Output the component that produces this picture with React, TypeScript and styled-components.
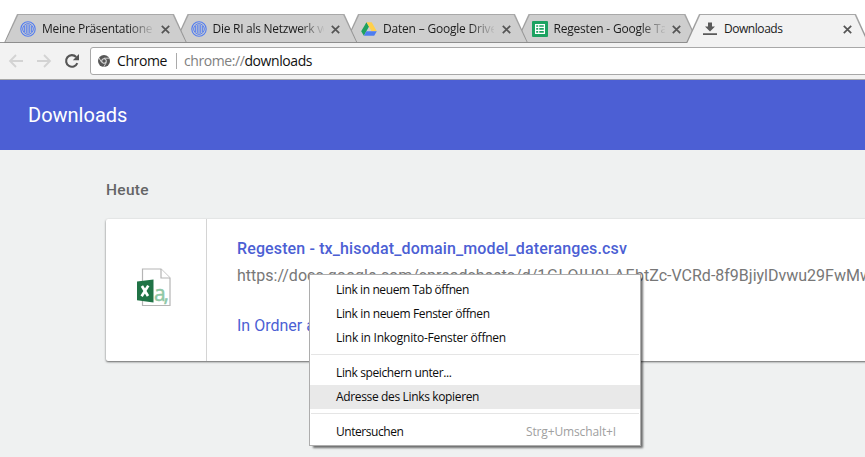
import React from "react";
import styled, { createGlobalStyle } from "styled-components";

const Global = createGlobalStyle`
  * { box-sizing: border-box; }
  html, body { margin: 0; background: #fff; overflow: hidden; }
`;

const UI_FONT = `"Open Sans", "Noto Sans", sans-serif`;

const Window = styled.div`
  width: 865px;
  height: 457px;
  overflow: hidden;
  position: relative;
  display: flex;
  flex-direction: column;
  background: #eff1f1;
  font-family: Roboto, sans-serif;
`;

const TabStrip = styled.div`
  height: 43px;
  flex: none;
  display: flex;
  align-items: flex-end;
  padding-left: 4px;
  background: #fff;
  box-shadow: inset 0 -1px 0 #979797;
`;

const TabBox = styled.div<{ $active?: boolean; $z: number }>`
  position: relative;
  z-index: ${(p) => p.$z};
  flex: none;
  width: 183px;
  height: 29px;
  margin-right: -12.5px;
  padding: 1px 15px 0 16px;
  display: flex;
  align-items: center;
  font: 12px/16px ${UI_FONT};
  color: #1c1c1c;

  &::before,
  &::after {
    content: "";
    position: absolute;
    z-index: -1;
    clip-path: polygon(13px 0, calc(100% - 13px) 0, 100% 100%, 0 100%);
  }
  &::before {
    inset: 0;
    background: linear-gradient(#a9a9a9, #8d8d8d);
  }
  &::after {
    inset: 1px 1.3px ${(p) => (p.$active ? 0 : 1)}px;
    background: ${(p) => (p.$active ? "#f2f2f2" : "#cecece")};
  }
`;

const Favicon = styled.span`
  width: 16px;
  height: 16px;
  flex: none;
  display: flex;
`;

const TabTitle = styled.span<{ $fade?: boolean; $spacing: number }>`
  width: 111px;
  flex: none;
  margin-left: 6px;
  overflow: hidden;
  white-space: nowrap;
  letter-spacing: ${(p) => p.$spacing}px;
  mask-image: ${(p) => (p.$fade ? "linear-gradient(90deg, #000 86px, transparent 113px)" : "none")};
`;

const CloseIcon = styled.svg`
  width: 9px;
  height: 9px;
  flex: none;
  margin-left: 7.5px;
`;

const Toolbar = styled.div`
  height: 37px;
  flex: none;
  display: flex;
  background: #f2f2f2;
  border-bottom: 1px solid #a7a7a7;
  padding: 4px 0 0 8px;
`;

const NavIcons = styled.div`
  display: flex;
  width: 82px;
  flex: none;
  gap: 12px;
  padding-top: 6px;
`;

const Omnibox = styled.div`
  flex: none;
  width: 790px;
  height: 28px;
  border: 1px solid #a8a8a8;
  border-radius: 3px;
  background: #fff;
  display: flex;
  align-items: center;
  padding-left: 7px;
  font: 14px/20px ${UI_FONT};
  color: #111;
`;

const Scheme = styled.span`
  width: 50px;
  margin-left: 7px;
  letter-spacing: -0.4px;
`;

const Divider = styled.span`
  width: 1px;
  height: 16px;
  margin: 0 7px 0 9px;
  background: #aaa;
`;

const Url = styled.span`
  letter-spacing: -0.42px;
  span { color: #808080; }
`;

const Header = styled.header`
  height: 70px;
  flex: none;
  display: flex;
  align-items: center;
  padding-left: 28px;
  background: #4c5fd4;
  color: #fff;
  font-size: 20px;
`;

const Content = styled.main`
  padding: 30px 0 0 106px;
`;

const DayHeading = styled.h2`
  margin: 0;
  font-size: 15.5px;
  line-height: 20px;
  font-weight: 500;
  letter-spacing: 0.3px;
  color: #646566;
`;

const Card = styled.section`
  margin-top: 19px;
  width: 800px;
  height: 142px;
  display: flex;
  background: #fff;
  border-radius: 2px;
  box-shadow: 0 1px 2px rgba(0, 0, 0, 0.5), 0 1px 3px rgba(0, 0, 0, 0.12);
`;

const FileCell = styled.div`
  width: 101px;
  border-right: 1px solid #d4d4d4;
  padding: 49px 0 0 30px;
`;

const Details = styled.div`
  padding: 19px 0 0 30px;
  white-space: nowrap;
  line-height: 22px;
`;

const FileName = styled.div`
  font-size: 16px;
  font-weight: 500;
  letter-spacing: 0.13px;
  color: #4c5fd4;
`;

const FileUrl = styled.div`
  margin-top: 5px;
  font-size: 16px;
  color: #777;
`;

const DocumentId = styled.span`
  letter-spacing: 0.7px;
`;

const FolderAction = styled.div`
  margin-top: 28px;
  font-size: 16px;
  color: #4c5fd4;
`;

const Menu = styled.div`
  position: absolute;
  left: 309px;
  top: 274px;
  width: 332px;
  height: 172px;
  z-index: 20;
  border: 1px solid #adadad;
  background: #fff;
  box-shadow: 3px 3px 2px -1px rgba(0, 0, 0, 0.55);
  padding-top: 3px;
  font: 12px/24px ${UI_FONT};
`;

const MenuItem = styled.div<{ $hover?: boolean; $spacing: number }>`
  height: 24px;
  display: flex;
  justify-content: space-between;
  padding: 0 24px 0 26px;
  background: ${(p) => (p.$hover ? "#e9e9e9" : "transparent")};
  color: #0c0c0c;
  letter-spacing: ${(p) => p.$spacing}px;
`;

const Shortcut = styled.span`
  color: #a0a0a0;
  letter-spacing: -0.13px;
`;

const Separator = styled.div`
  height: 1px;
  margin: 4px 1px 6px;
  background: #e5e5e5;
`;

const Rings = () => (
  <svg width="16" height="16" viewBox="0 0 16 16" fill="none" stroke="#4f7bf2">
    <circle cx="8" cy="8" r="7.2" strokeWidth="1.1" />
    <circle cx="8" cy="8" r="5.3" strokeWidth="1" />
    <path d="M4.6 5v6M6.3 4v8M8 3.6v8.8M9.7 4v8M11.4 5v6" strokeWidth="0.9" />
  </svg>
);

const Drive = () => (
  <svg width="16" height="16" viewBox="0 0 16 16">
    <path d="M5.5 1.2 0.2 10.2 2.9 14.7 8 5.6z" fill="#1da15f" />
    <path d="M5.5 1.2h5.2l5.1 9h-5.2z" fill="#ffd04a" />
    <path d="M5.4 10.2h10.4l-2.6 4.5H2.9z" fill="#4d7df0" />
  </svg>
);

const Sheets = () => (
  <svg width="16" height="16" viewBox="0 0 16 16">
    <rect width="16" height="16" rx="1" fill="#1ca261" />
    <path d="M3 3h10v10H3z" fill="#fff" />
    <path d="M4.2 4.2h2v1.6h-2zM7.3 4.2h4.5v1.6H7.3zM4.2 7.1h2v1.7h-2zM7.3 7.1h4.5v1.7H7.3zM4.2 10.1h2v1.7h-2zM7.3 10.1h4.5v1.7H7.3z" fill="#1ca261" />
  </svg>
);

const Download = () => (
  <svg width="16" height="16" viewBox="0 0 16 16" fill="#5a5a5a">
    <path d="M6 1.5h4v4h3L8 10.5 3 5.5h3zM1 12.2h14V14H1z" />
  </svg>
);

const Arrow = ({ flip }: { flip?: boolean }) => (
  <svg width="16" height="16" viewBox="0 0 16 16" fill="none" stroke="#d3d3d3" strokeWidth="1.8">
    <path d={flip ? "M1 8h13M8 2l6 6-6 6" : "M15 8H2M8 2 2 8l6 6"} />
  </svg>
);

const Reload = () => (
  <svg width="16" height="16" viewBox="0 0 16 16">
    <path d="M13.3 10.1A5.8 5.8 0 1 1 12.2 4" fill="none" stroke="#555" strokeWidth="2.1" />
    <path d="M15 1v6.2H8.8z" fill="#555" />
  </svg>
);

const ChromeLogo = () => (
  <svg width="12" height="12" viewBox="0 0 12 12">
    <circle cx="6" cy="6" r="6" fill="#575757" />
    <path d="M6 3.2h5.3M3.6 7.4.9 2.8M8.4 7.4l-2.7 4.6" stroke="#fff" strokeWidth="0.7" />
    <circle cx="6" cy="6" r="2.3" fill="#575757" stroke="#fff" strokeWidth="0.9" />
  </svg>
);

const Spreadsheet = () => (
  <svg width="36" height="39" viewBox="0 0 36 39">
    <path d="M6.5 1H25l9 9v27.5H6.5z" fill="#fff" stroke="#b5b5b5" strokeWidth="1.2" />
    <path d="M25 1v9h9" fill="#fff" stroke="#b5b5b5" strokeWidth="1.2" />
    <path d="M1 13.6 17.5 11.5v23L1 32.2z" fill="#207346" />
    <path d="m5.9 18 6.1 10M12.3 17.6 5.6 28.2" stroke="#fff" strokeWidth="2.7" />
    <text x="18" y="32.5" fontFamily="Open Sans, sans-serif" fontSize="21" fill="#8fc7a5" stroke="#8fc7a5" strokeWidth=".5" textLength="15">a,</text>
  </svg>
);

const tabs = [
  { title: "Meine Präsentationen", icon: <Rings />, spacing: -0.3 },
  { title: "Die RI als Netzwerk von", icon: <Rings />, spacing: -0.27 },
  { title: "Daten – Google Drive", icon: <Drive />, spacing: -0.2 },
  { title: "Regesten - Google Tabellen", icon: <Sheets />, spacing: -0.2 },
  { title: "Downloads", icon: <Download />, spacing: -0.45, active: true },
];

export default function App() {
  return (
    <Window>
      <Global />
      <TabStrip>
        {tabs.map((t, i) => (
          <TabBox key={t.title} $active={t.active} $z={t.active ? 10 : 5 - i}>
            <Favicon>{t.icon}</Favicon>
            <TabTitle $fade={!t.active} $spacing={t.spacing}>{t.title}</TabTitle>
            <CloseIcon viewBox="0 0 9 9">
              <path d="m.8.8 7.4 7.4M8.2.8.8 8.2" stroke="#555" strokeWidth="1.7" />
            </CloseIcon>
          </TabBox>
        ))}
      </TabStrip>
      <Toolbar>
        <NavIcons>
          <Arrow />
          <Arrow flip />
          <Reload />
        </NavIcons>
        <Omnibox>
          <ChromeLogo />
          <Scheme>Chrome</Scheme>
          <Divider />
          <Url><span>chrome://</span>downloads</Url>
        </Omnibox>
      </Toolbar>
      <Header>Downloads</Header>
      <Content>
        <DayHeading>Heute</DayHeading>
        <Card>
          <FileCell><Spreadsheet /></FileCell>
          <Details>
            <FileName>Regesten - tx_hisodat_domain_model_dateranges.csv</FileName>
            <FileUrl>
              https://docs.google.com/spreadsheets/d/<DocumentId>1GLQIU9LAF</DocumentId>btZc-VCRd-8f9BjiylDvwu29FwMw
            </FileUrl>
            <FolderAction>In Ordner anzeigen</FolderAction>
          </Details>
        </Card>
      </Content>
      <Menu>
        <MenuItem $spacing={-0.4}>Link in neuem Tab öffnen</MenuItem>
        <MenuItem $spacing={-0.36}>Link in neuem Fenster öffnen</MenuItem>
        <MenuItem $spacing={-0.25}>Link in Inkognito-Fenster öffnen</MenuItem>
        <Separator />
        <MenuItem $spacing={-0.38}>Link speichern unter...</MenuItem>
        <MenuItem $hover $spacing={-0.35}>Adresse des Links kopieren</MenuItem>
        <Separator />
        <MenuItem $spacing={-0.45}>Untersuchen<Shortcut>Strg+Umschalt+I</Shortcut></MenuItem>
      </Menu>
    </Window>
  );
}
